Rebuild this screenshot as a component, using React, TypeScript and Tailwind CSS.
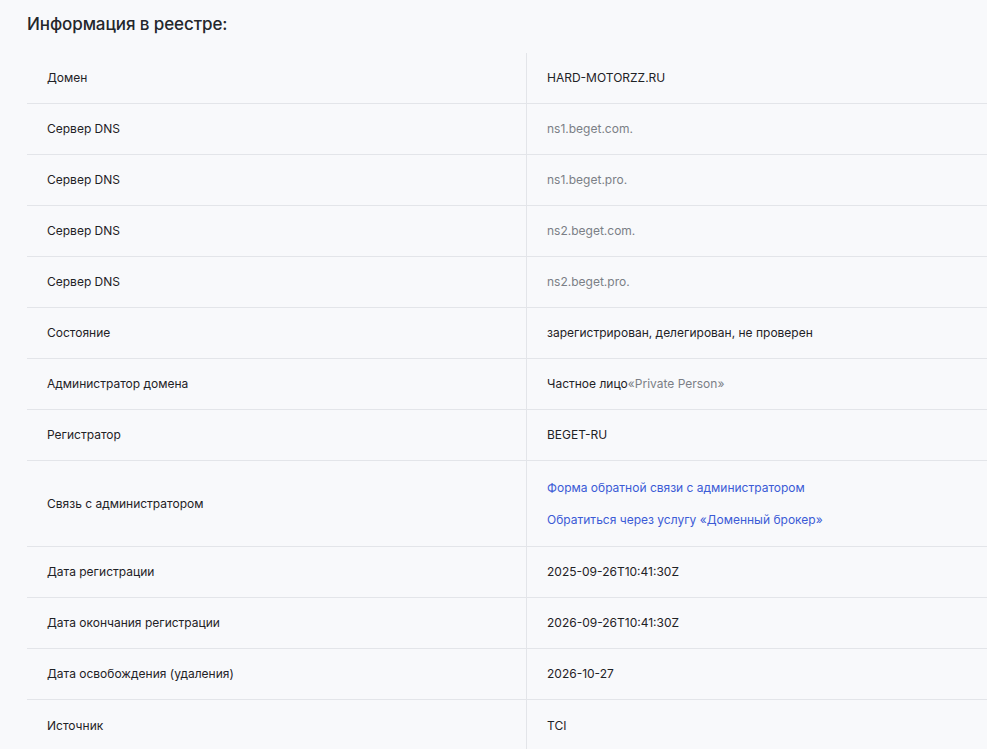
import React from "react";

type Row = { k: string; v: React.ReactNode; tall?: boolean };

const gray = "text-[#7b7f86]";

const rows: Row[] = [
  { k: "Домен", v: "HARD-MOTORZZ.RU" },
  { k: "Сервер DNS", v: <span className={gray}>ns1.beget.com.</span> },
  { k: "Сервер DNS", v: <span className={gray}>ns1.beget.pro.</span> },
  { k: "Сервер DNS", v: <span className={gray}>ns2.beget.com.</span> },
  { k: "Сервер DNS", v: <span className={gray}>ns2.beget.pro.</span> },
  { k: "Состояние", v: "зарегистрирован, делегирован, не проверен" },
  { k: "Администратор домена", v: <>Частное лицо <span className={gray}>«Private Person»</span></> },
  { k: "Регистратор", v: "BEGET-RU" },
  {
    k: "Связь с администратором",
    tall: true,
    v: (
      <div className="flex flex-col gap-[14px] text-[#3b5bd6]">
        <span>Форма обратной связи с администратором</span>
        <span>Обратиться через услугу «Доменный брокер»</span>
      </div>
    ),
  },
  { k: "Дата регистрации", v: "2025-09-26T10:41:30Z" },
  { k: "Дата окончания регистрации", v: "2026-09-26T10:41:30Z" },
  { k: "Дата освобождения (удаления)", v: "2026-10-27" },
  { k: "Источник", v: "TCI" },
];

export default function App() {
  return (
    <div
      className="min-h-screen bg-[#f8f9fb] text-[#1f2226] overflow-hidden"
      style={{ fontFamily: "Inter, 'Noto Sans', sans-serif" }}
    >
      <div className="pl-[27px] pt-[13px]">
        <h2 className="text-[17px] font-medium leading-[22px] text-[#24272b] tracking-[-0.1px]">
          Информация в реестре:
        </h2>
        <div className="mt-[18px] w-[1000px] text-[12px]">
          {rows.map((r, i) => (
            <div
              key={i}
              className={`flex ${i < rows.length - 1 ? "border-b border-[#e3e5e9]" : ""} ${r.tall ? "h-[86px]" : "h-[51px]"}`}
            >
              <div className="w-[499px] pl-[20px] flex items-center">{r.k}</div>
              <div className="flex-1 border-l border-[#e3e5e9] pl-[20px] flex items-center">{r.v}</div>
            </div>
          ))}
        </div>
      </div>
    </div>
  );
}
